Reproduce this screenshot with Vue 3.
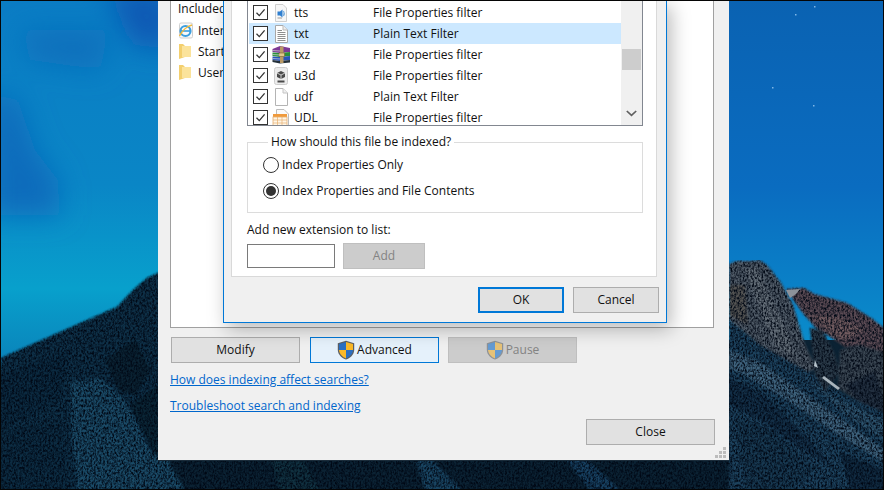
<script setup>
const includedItems = [
  { kind: 'ie', label: 'Internet Explorer' },
  { kind: 'folder', label: 'Start Menu' },
  { kind: 'folder', label: 'Users' }
]
const rows = [
  { icon: 'tts', ext: 'tts', filter: 'File Properties filter' },
  { icon: 'txt', ext: 'txt', filter: 'Plain Text Filter', selected: true },
  { icon: 'txz', ext: 'txz', filter: 'File Properties filter' },
  { icon: 'u3d', ext: 'u3d', filter: 'File Properties filter' },
  { icon: 'udf', ext: 'udf', filter: 'Plain Text Filter' },
  { icon: 'udl', ext: 'UDL', filter: 'File Properties filter' }
]
const stars = [[90, 6], [71, 14], [48, 87], [89, 105]]
</script>

<template>
  <div class="desktop">
    <svg class="wallpaper" width="884" height="490" viewBox="0 0 884 490">
      <defs>
        <linearGradient id="skyR" x1="0" y1="0" x2="0" y2="1">
          <stop offset="0" stop-color="#0a62b2" />
          <stop offset="0.55" stop-color="#0a6cc0" />
          <stop offset="1" stop-color="#0a8ccb" />
        </linearGradient>
        <linearGradient id="skyL" x1="0" y1="0" x2="0" y2="1">
          <stop offset="0" stop-color="#0a7cc4" />
          <stop offset="0.5" stop-color="#0a86c6" />
          <stop offset="0.78" stop-color="#08a0cc" />
          <stop offset="1" stop-color="#0a80b8" />
        </linearGradient>
        <filter id="soft" x="-30%" y="-30%" width="160%" height="160%">
          <feGaussianBlur stdDeviation="14" />
        </filter>
        <filter id="rock" x="0" y="0" width="100%" height="100%" color-interpolation-filters="sRGB">
          <feGaussianBlur in="SourceGraphic" stdDeviation="0.9" result="b" />
          <feTurbulence type="fractalNoise" baseFrequency="0.55 0.4" numOctaves="3" seed="4" result="n" />
          <feColorMatrix in="n" type="matrix" values="0 0 0 0 0  0 0 0 0 0.03  0 0 0 0 0.08  2.4 0 0 0 -0.85" result="dark" />
          <feComposite in="dark" in2="b" operator="in" result="d" />
          <feMerge>
            <feMergeNode in="b" />
            <feMergeNode in="d" />
          </feMerge>
        </filter>
      </defs>

      <rect x="0" y="0" width="160" height="370" fill="url(#skyL)" />
      <rect x="725" y="0" width="160" height="340" fill="url(#skyR)" />
      <g filter="url(#soft)">
        <path d="M-10 90 L18 100 L35 150 L58 180 L60 215 L-10 215Z" fill="#0a6cbc" />
        <path d="M105 -10 L170 -10 L170 50 L135 45Z" fill="#0a58b4" />
        <path d="M20 30 L110 30 L100 70 L30 60Z" fill="#0a70bc" />
      </g>
      <rect v-for="s in stars" :key="s[0] + '-' + s[1]" :x="724 + s[0]" :y="s[1] * 1" width="1.5" height="1.5" fill="#7fb6e6" />

      <g filter="url(#rock)">
        <!-- left slope -->
        <path d="M1 358 L117 307 L133 290 L147 278 L160 272 L160 490 L0 490Z" fill="#0e3047" />
        <path d="M70 382 L100 378 L125 400 L150 450 L170 490 L78 490 L72 440Z" fill="#1a4a66" />
        <path d="M105 360 L135 340 L150 370 L135 395 L118 390Z" fill="#0a2232" />
        <path d="M130 405 L158 385 L160 460 L150 445Z" fill="#0a2535" />
        <path d="M0 375 L70 350 L60 400 L0 430Z" fill="#0b2a40" />
        <path d="M0 430 L60 420 L70 490 L0 490Z" fill="#0c2c42" />
        <!-- under the window -->
        <rect x="158" y="455" width="575" height="36" fill="#0b2233" />
        <path d="M150 455 L165 455 L185 490 L150 490Z" fill="#1a4a66" />
        <path d="M415 458 L430 458 L462 490 L425 490Z" fill="#194562" />
        <path d="M565 458 L585 458 L620 490 L590 490Z" fill="#174060" />
        <path d="M270 455 L300 455 L320 490 L280 490Z" fill="#10303f" />
        <!-- right mountain -->
        <path d="M729 320 L760 345 L810 372 L830 385 L845 395 L884 412 L884 490 L729 490Z" fill="#1c415c" />
        <path d="M729 350 L760 362 L800 390 L850 425 L884 450 L884 462 L840 436 L790 402 L745 375 L729 368Z" fill="#3e627c" />
        <path d="M729 378 L765 395 L800 430 L830 465 L795 445 L760 420 L729 405Z" fill="#132f47" />
        <path d="M800 372 L835 398 L884 420 L884 440 L845 415Z" fill="#2c526c" />
        <path d="M735 415 L775 432 L815 470 L790 490 L745 490Z" fill="#173850" />
        <path d="M840 452 L884 470 L884 490 L850 490Z" fill="#102a40" />
        <path d="M729 264 L737 261 L752 261 L759 260 L767 265 L781 283 L793 305 L805 345 L816 368 L808 372 L760 345 L729 320Z" fill="#4f5a66" />
        <path d="M745 270 L757 268 L770 295 L786 330 L795 358 L775 345 L760 310Z" fill="#626c76" />
        <path d="M729 285 L745 285 L748 325 L729 315Z" fill="#535352" />
        <path d="M786 289 L804 288 L814 294 L847 303 L871 318 L884 328 L884 355 L860 345 L845 347 L838 342 L815 327 L802 312Z" fill="#5a4a53" />
        <path d="M812 315 L840 318 L865 330 L845 340 L830 335Z" fill="#705a5e" />
        <path d="M810 328 L822 330 L834 352 L840 372 L825 392 L815 375Z" fill="#2a3a48" />
        <path d="M840 350 L860 345 L884 352 L884 412 L860 402 L838 388Z" fill="#3a4652" />
        <path d="M845 385 L875 372 L884 400 L884 412 L860 402Z" fill="#222f3f" />
      </g>
      <path d="M786 290 L800 289 L796 294 L790 298Z" fill="#8c929a" />
      <path d="M815 360 L818 368 L814 366Z" fill="#b8c4cc" />
      <path d="M824 376 L840 388 L838 390 L822 378Z" fill="#a8b4bc" />
    </svg>

    <section class="main">
      <div class="panel">
        <div class="included-title">Included</div>
        <div v-for="item in includedItems" :key="item.label" class="included-row">
          <svg v-if="item.kind === 'ie'" class="inc-icon" width="16" height="17" viewBox="0 0 16 17">
            <rect x="1.5" y="1" width="13" height="15" rx="1.5" fill="#fafafa" stroke="#cfcfcf" />
            <circle cx="7.5" cy="9" r="5" fill="none" stroke="#3c9fe0" stroke-width="2.2" />
            <path d="M3 9 H12" stroke="#3c9fe0" stroke-width="1.6" />
            <path d="M1.5 14 C4 9 9 4 14 3" fill="none" stroke="#f0b93a" stroke-width="1.4" />
          </svg>
          <svg v-else class="inc-icon" width="16" height="17" viewBox="0 0 16 17">
            <path d="M1 1 H5 L7 3 V14 L1 16Z" fill="#f3cf6e" />
            <path d="M4 3 H13 V14 H4Z" fill="#fbe39b" />
          </svg>
          <span>{{ item.label }}</span>
        </div>
      </div>

      <div class="main-actions">
        <button class="btn wide">Modify</button>
        <button class="btn wide focus">
          <svg width="18" height="20" viewBox="0 0 18 20">
            <path d="M9 .8 L17.2 3.3 V10 C17 15 13 18.2 9 19.6 C5 18.2 1 15 .8 10 V3.3Z" fill="#5a5f66" />
            <path d="M9 2 L2 4 V10 H9Z" fill="#2b6fc2" />
            <path d="M9 2 L16 4 V10 H9Z" fill="#fbb928" />
            <path d="M2 10 C2.5 14.5 5.5 17 9 18.4 V10Z" fill="#fbb928" />
            <path d="M16 10 C15.5 14.5 12.5 17 9 18.4 V10Z" fill="#2b6fc2" />
          </svg>
          <span>Advanced</span>
        </button>
        <button class="btn wide disabled">
          <svg width="18" height="20" viewBox="0 0 18 20">
            <path d="M9 .8 L17.2 3.3 V10 C17 15 13 18.2 9 19.6 C5 18.2 1 15 .8 10 V3.3Z" fill="#8f9296" />
            <path d="M9 2 L2 4 V10 H9Z" fill="#659bd2" />
            <path d="M9 2 L16 4 V10 H9Z" fill="#e6c277" />
            <path d="M2 10 C2.5 14.5 5.5 17 9 18.4 V10Z" fill="#e6c277" />
            <path d="M16 10 C15.5 14.5 12.5 17 9 18.4 V10Z" fill="#659bd2" />
          </svg>
          <span>Pause</span>
        </button>
      </div>

      <a class="link first">How does indexing affect searches?</a>
      <a class="link">Troubleshoot search and indexing</a>
      <button class="btn wide close">Close</button>

      <svg class="grip" width="12" height="12" viewBox="0 0 12 12">
        <path d="M8 0h3v3H8zM4 4h3v3H4zM8 4h3v3H8zM0 8h3v3H0zM4 8h3v3H4zM8 8h3v3H8z" fill="#bcbcbc" />
      </svg>

      <section class="dialog">
        <div class="tab">
          <div class="list">
            <div class="rows">
              <div v-for="r in rows" :key="r.ext" class="row" :class="{ selected: r.selected }">
                <span class="check">
                  <svg width="13" height="13" viewBox="0 0 13 13">
                    <path d="M2.5 6.8 L5.3 9.6 L10.6 3.4" fill="none" stroke="#333" stroke-width="1.3" />
                  </svg>
                </span>
                <svg class="file-icon" width="18" height="18" viewBox="0 0 18 18">
                  <template v-if="r.icon === 'tts'">
                    <path d="M3.5 .5 H11 L14.5 4 V17.5 H3.5Z" fill="#f7f7f7" stroke="#cfcfcf" />
                    <path d="M5.5 7.5 H8 L10.5 5.5 V13.5 L8 11.5 H5.5Z" fill="#2f7fd0" />
                    <path d="M11.5 7 Q13 9.5 11.5 12" fill="none" stroke="#6fa8dc" stroke-width="1.2" />
                    <path d="M5.5 14 H10" stroke="#9a9a9a" />
                  </template>
                  <template v-else-if="r.icon === 'txt'">
                    <path d="M3.5 .5 H11 L15.5 5 V17.5 H3.5Z" fill="#fff" stroke="#a8a8a8" />
                    <path d="M11 .5 V5 H15.5" fill="#eee" stroke="#b8b8b8" />
                    <path d="M5.5 5.5 H10 M5.5 7.5 H13.5 M5.5 9.5 H13.5 M5.5 11.5 H13.5 M5.5 13.5 H13.5 M5.5 15.5 H13.5" stroke="#8f8f8f" />
                  </template>
                  <template v-else-if="r.icon === 'txz'">
                    <path d="M.5 3 L8 0 L18 2 V6 L8 7 L.5 6Z" fill="#7d3a96" />
                    <path d="M.5 6.5 L8 7 L18 6 V10 L8 11 L.5 10Z" fill="#2b8f3b" />
                    <path d="M.5 10.5 L8 11 L18 10 V14 L8 15 L.5 14Z" fill="#2855b8" />
                    <path d="M.5 14 L8 15 L18 14 V16.5 L8 17.5 L.5 16Z" fill="#24303a" />
                    <path d="M8 .5 H11.5 V17 H8Z" fill="#b99a66" />
                    <path d="M7 7 H12.5 V10.5 H7Z" fill="#e0c88c" stroke="#7a5f30" stroke-width=".6" />
                    <path d="M.5 4.5 L8 5 M.5 8.5 L8 9 M.5 12.5 L8 13" stroke="#d9d9d9" stroke-width=".7" />
                  </template>
                  <template v-else-if="r.icon === 'u3d'">
                    <rect x="2.5" y=".5" width="13" height="17" rx="2" fill="#ececec" stroke="#cdcdcd" />
                    <path d="M9 4 L13 6 V10 L9 12 L5 10 V6Z" fill="#4a4a4a" />
                    <path d="M5 6 L9 8 L13 6 M9 8 V12" fill="none" stroke="#ededed" stroke-width=".8" />
                    <path d="M5.5 13.5 H12.5 V15.5 H5.5Z" fill="#4a4a4a" />
                  </template>
                  <template v-else-if="r.icon === 'udf'">
                    <path d="M3.5 .5 H11 L15.5 5 V17.5 H3.5Z" fill="#fff" stroke="#b4b4b4" />
                    <path d="M11 .5 V5 H15.5" fill="#f0f0f0" stroke="#c4c4c4" />
                  </template>
                  <template v-else>
                    <path d="M4.5 .5 H12 L16.5 5 V17.5 H4.5Z" fill="#fafafa" stroke="#bdbdbd" />
                    <rect x="1" y="5" width="14" height="3" fill="#f09a3c" />
                    <rect x="1" y="8" width="14" height="9" fill="#fff6e6" stroke="#e6b070" stroke-width=".8" />
                    <path d="M1 11 H15 M1 14 H15 M5.5 8 V17 M10 8 V17" stroke="#e6b070" stroke-width=".7" />
                  </template>
                </svg>
                <span class="ext">{{ r.ext }}</span>
                <span class="filter">{{ r.filter }}</span>
              </div>
            </div>
            <div class="scrollbar">
              <div class="thumb"></div>
              <svg class="chevron" width="11" height="7" viewBox="0 0 11 7">
                <path d="M.8 1 L5.5 5.4 L10.2 1" fill="none" stroke="#606060" stroke-width="1.7" />
              </svg>
            </div>
          </div>

          <fieldset class="group">
            <legend>How should this file be indexed?</legend>
            <label class="radio-row"><span class="radio"></span>Index Properties Only</label>
            <label class="radio-row"><span class="radio on"></span>Index Properties and File Contents</label>
          </fieldset>

          <div class="add-label">Add new extension to list:</div>
          <div class="add-row">
            <div class="add-input"></div>
            <button class="btn add disabled">Add</button>
          </div>
        </div>

        <div class="dialog-actions">
          <button class="btn dlg default">OK</button>
          <button class="btn dlg">Cancel</button>
        </div>
      </section>
    </section>

    <div class="frame"></div>
  </div>
</template>

<style>
html, body { margin: 0; background: #0b2233; }
</style>

<style scoped>
.desktop {
  position: relative;
  width: 884px;
  height: 490px;
  overflow: hidden;
  font-family: "Open Sans", "Liberation Sans", sans-serif;
  font-size: 12px;
  line-height: 16px;
  color: #111;
}
.wallpaper { position: absolute; left: 0; top: 0; display: block; }
.frame {
  position: absolute;
  inset: 0;
  border: 1px solid #050505;
  pointer-events: none;
}

.main {
  position: absolute;
  left: 158px;
  top: 0;
  width: 571px;
  height: 460px;
  box-sizing: border-box;
  padding: 0 14px 0 12px;
  background: #f0f0f0;
  box-shadow: 0 1px 0 #1b2c3a;
  display: flex;
  flex-direction: column;
}
.panel {
  width: 544px;
  height: 328px;
  box-sizing: border-box;
  flex: none;
  background: #fff;
  border: 1px solid #a0a0a0;
  border-top: 0;
  padding-left: 7px;
  white-space: nowrap;
  overflow: hidden;
}
.included-title { height: 20px; line-height: 17px; }
.included-row { display: flex; align-items: center; gap: 4px; height: 21px; }
.inc-icon { flex: none; }

.main-actions { display: flex; gap: 9px; margin: 9px 0 0 1px; }
.btn {
  box-sizing: border-box;
  margin: 0;
  padding: 0;
  font: inherit;
  color: #111;
  background: #e1e1e1;
  border: 1px solid #adadad;
  display: inline-flex;
  align-items: center;
  justify-content: center;
  gap: 2px;
}
.wide { width: 129px; height: 26px; flex: none; }
.focus { background: #e5f1fb; border-color: #0078d7; margin-left: 1px; }
.disabled { background: #cccccc; border-color: #bfbfbf; color: #838383; }
.link { color: #0066cc; text-decoration: underline; width: fit-content; margin-top: 10px; }
.link.first { margin-top: 9px; }
.close { align-self: flex-end; margin-top: 5px; }
.grip { position: absolute; right: 2px; bottom: 1px; }

.dialog {
  position: absolute;
  left: 65px;
  top: 0;
  width: 444px;
  height: 323px;
  box-sizing: border-box;
  background: #f0f0f0;
  border: 1px solid #0078d7;
  border-top: 0;
  padding: 0 7px 0 7px;
  box-shadow: 4px 6px 18px rgba(0, 0, 0, 0.28);
}
.tab {
  width: 426px;
  height: 277px;
  box-sizing: border-box;
  background: #fff;
  border: 1px solid #d9d9d9;
  border-top: 0;
  padding: 0 13px 0 15px;
}
.list {
  height: 126px;
  box-sizing: border-box;
  border: 1px solid #828790;
  border-top: 0;
  display: flex;
  overflow: hidden;
}
.rows { flex: 1; padding: 2px 0 0 1px; min-width: 0; }
.row { display: flex; align-items: center; height: 21px; white-space: nowrap; }
.row.selected { background: #cce8ff; }
.check {
  box-sizing: border-box;
  flex: none;
  width: 15px;
  height: 15px;
  margin-left: 4px;
  border: 1px solid #333;
  background: #fff;
  display: flex;
  align-items: center;
  justify-content: center;
}
.file-icon { flex: none; margin-left: 4px; }
.ext { width: 79px; margin-left: 4px; flex: none; }
.scrollbar {
  flex: none;
  width: 21px;
  background: #f0f0f0;
  display: flex;
  flex-direction: column;
  align-items: center;
}
.thumb { width: 19px; height: 21px; margin-top: 49px; margin-right: 1px; background: #cdcdcd; }
.chevron { margin-top: auto; margin-bottom: 8px; }

.group {
  box-sizing: border-box;
  height: 79px;
  margin: 8px 0 0;
  padding: 2px 0 0 15px;
  min-width: 0;
  border: 1px solid #dcdcdc;
}
.group legend { padding: 0 3px; margin-left: 5px; line-height: 16px; }
.radio-row { display: flex; align-items: center; gap: 3px; height: 26px; }
.radio {
  box-sizing: border-box;
  flex: none;
  width: 16px;
  height: 16px;
  border: 1px solid #333;
  border-radius: 50%;
  background: #fff;
  display: flex;
  align-items: center;
  justify-content: center;
}
.radio.on::after {
  content: "";
  width: 10px;
  height: 10px;
  border-radius: 50%;
  background: #333;
}
.add-label { margin-top: 9px; }
.add-row { display: flex; align-items: center; gap: 8px; margin-top: 5px; }
.add-input {
  box-sizing: border-box;
  width: 88px;
  height: 24px;
  background: #fff;
  border: 1px solid #7a7a7a;
}
.add { width: 82px; height: 26px; }
.dialog-actions {
  display: flex;
  justify-content: flex-end;
  gap: 9px;
  margin-top: 10px;
}
.dlg { width: 86px; height: 26px; }
.default { border: 2px solid #0078d7; }
</style>
